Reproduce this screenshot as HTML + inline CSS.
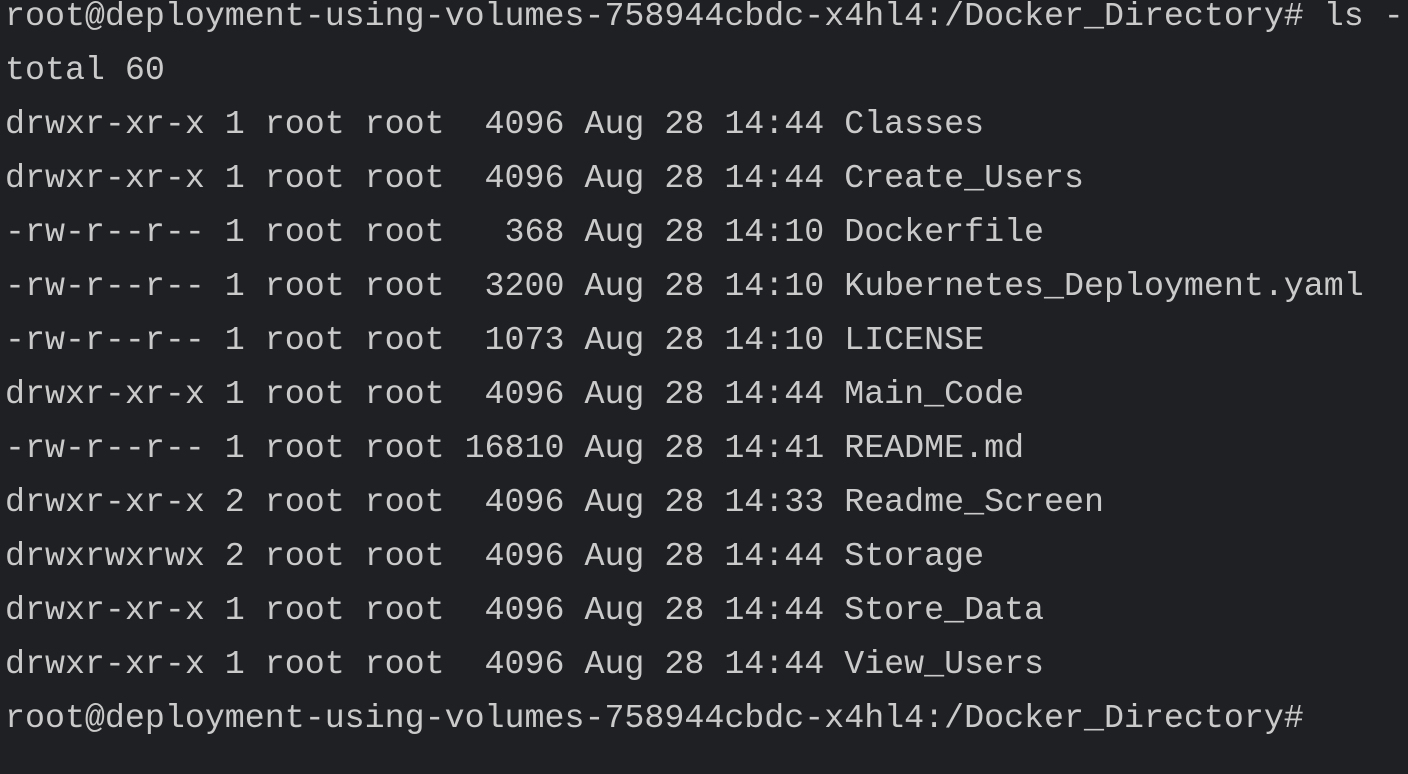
<!DOCTYPE html>
<html><head><meta charset="utf-8"><style>
html,body{margin:0;padding:0;background:#1f2024;width:1408px;height:774px;overflow:hidden}
pre{margin:0;position:absolute;left:5px;top:-11px;font-family:"Liberation Mono",monospace;font-size:33.3px;line-height:54px;color:#cacaca;white-space:pre}
</style></head><body><pre>root@deployment-using-volumes-758944cbdc-x4hl4:/Docker_Directory# ls -l
total 60
drwxr-xr-x 1 root root  4096 Aug 28 14:44 Classes
drwxr-xr-x 1 root root  4096 Aug 28 14:44 Create_Users
-rw-r--r-- 1 root root   368 Aug 28 14:10 Dockerfile
-rw-r--r-- 1 root root  3200 Aug 28 14:10 Kubernetes_Deployment.yaml
-rw-r--r-- 1 root root  1073 Aug 28 14:10 LICENSE
drwxr-xr-x 1 root root  4096 Aug 28 14:44 Main_Code
-rw-r--r-- 1 root root 16810 Aug 28 14:41 README.md
drwxr-xr-x 2 root root  4096 Aug 28 14:33 Readme_Screen
drwxrwxrwx 2 root root  4096 Aug 28 14:44 Storage
drwxr-xr-x 1 root root  4096 Aug 28 14:44 Store_Data
drwxr-xr-x 1 root root  4096 Aug 28 14:44 View_Users
root@deployment-using-volumes-758944cbdc-x4hl4:/Docker_Directory#</pre></body></html>
